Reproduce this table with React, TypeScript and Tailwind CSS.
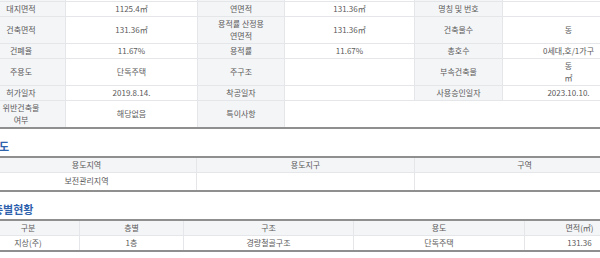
const font = { fontFamily: '"Noto Sans CJK KR", "Noto Sans", sans-serif' };

const lbl = 'border border-[#e4e6ea] bg-[#f4f5f7] px-1 py-px text-center align-middle';
const val = 'border border-[#e4e6ea] bg-white px-1 py-px text-center align-middle';

function Title({ children, className }: { children: string; className: string }) {
  return (
    <div className={`pt-[10px] pb-[3px] text-[11px] font-bold leading-[14px] text-[#2f62ad] ${className}`}>
      {children}
    </div>
  );
}

export default function App() {
  return (
    <div
      className="h-[258px] w-[600px] overflow-hidden bg-white text-[8px] leading-[12px] text-[#5a5a5a]"
      style={font}
    >
      <div className="-ml-[24px] w-[658px]">
        {/* 건축물 개요 */}
        <table className="-mt-[13px] w-[658px] table-fixed border-collapse border-b-2 border-b-[#8f8f8f]">
          <colgroup>
            <col className="w-[89px]" />
            <col className="w-[132px]" />
            <col className="w-[87px]" />
            <col className="w-[130px]" />
            <col className="w-[88px]" />
            <col className="w-[132px]" />
          </colgroup>
          <tbody>
            <tr className="h-[14px]">
              <td className={lbl}></td>
              <td className={val}></td>
              <td className={lbl}></td>
              <td className={val}></td>
              <td className={lbl}></td>
              <td className={val}></td>
            </tr>
            <tr>
              <td className={lbl}>대지면적</td>
              <td className={val}>1125.4㎡</td>
              <td className={lbl}>연면적</td>
              <td className={val}>131.36㎡</td>
              <td className={lbl}>명칭 및 번호</td>
              <td className={val}></td>
            </tr>
            <tr>
              <td className={lbl}>건축면적</td>
              <td className={val}>131.36㎡</td>
              <td className={lbl}>
                용적률 산정용
                <br />
                연면적
              </td>
              <td className={val}>131.36㎡</td>
              <td className={lbl}>건축물수</td>
              <td className={val}>동</td>
            </tr>
            <tr>
              <td className={lbl}>건폐율</td>
              <td className={val}>11.67%</td>
              <td className={lbl}>용적률</td>
              <td className={val}>11.67%</td>
              <td className={lbl}>총호수</td>
              <td className={val}>0세대,호/1가구</td>
            </tr>
            <tr>
              <td className={lbl}>주용도</td>
              <td className={val}>단독주택</td>
              <td className={lbl}>주구조</td>
              <td className={val}></td>
              <td className={lbl}>부속건축물</td>
              <td className={val}>
                동
                <br />㎡
              </td>
            </tr>
            <tr>
              <td className={lbl}>허가일자</td>
              <td className={val}>2019.8.14.</td>
              <td className={lbl}>착공일자</td>
              <td className={val}></td>
              <td className={lbl}>사용승인일자</td>
              <td className={val}>2023.10.10.</td>
            </tr>
            <tr>
              <td className={lbl}>
                위반건축물
                <br />
                여부
              </td>
              <td className={val}>해당없음</td>
              <td className={lbl}>특이사항</td>
              <td className={val} colSpan={3}></td>
            </tr>
          </tbody>
        </table>

        <Title className="ml-[13px]">용도</Title>
        <table className="w-[658px] table-fixed border-collapse border-y-2 border-y-[#8f8f8f]">
          <colgroup>
            <col className="w-[220px]" />
            <col className="w-[218px]" />
            <col className="w-[220px]" />
          </colgroup>
          <tbody>
            <tr className="h-[15px]">
              <td className={lbl}>용도지역</td>
              <td className={lbl}>용도지구</td>
              <td className={lbl}>구역</td>
            </tr>
            <tr className="h-[18px]">
              <td className={val}>보전관리지역</td>
              <td className={val}></td>
              <td className={val}></td>
            </tr>
          </tbody>
        </table>

        <Title className="ml-[17px]">층별현황</Title>
        <table className="w-[658px] table-fixed border-collapse border-y-2 border-y-[#8f8f8f]">
          <colgroup>
            <col className="w-[103px]" />
            <col className="w-[104px]" />
            <col className="w-[170px]" />
            <col className="w-[171px]" />
            <col className="w-[110px]" />
          </colgroup>
          <tbody>
            <tr className="h-[15px]">
              <td className={lbl}>구분</td>
              <td className={lbl}>층별</td>
              <td className={lbl}>구조</td>
              <td className={lbl}>용도</td>
              <td className={lbl}>면적(㎡)</td>
            </tr>
            <tr className="h-[16px]">
              <td className={val}>지상(주)</td>
              <td className={val}>1층</td>
              <td className={val}>경량철골구조</td>
              <td className={val}>단독주택</td>
              <td className={val}>131.36</td>
            </tr>
          </tbody>
        </table>

        <Title className="ml-[17px]">부속지번</Title>
      </div>
    </div>
  );
}
